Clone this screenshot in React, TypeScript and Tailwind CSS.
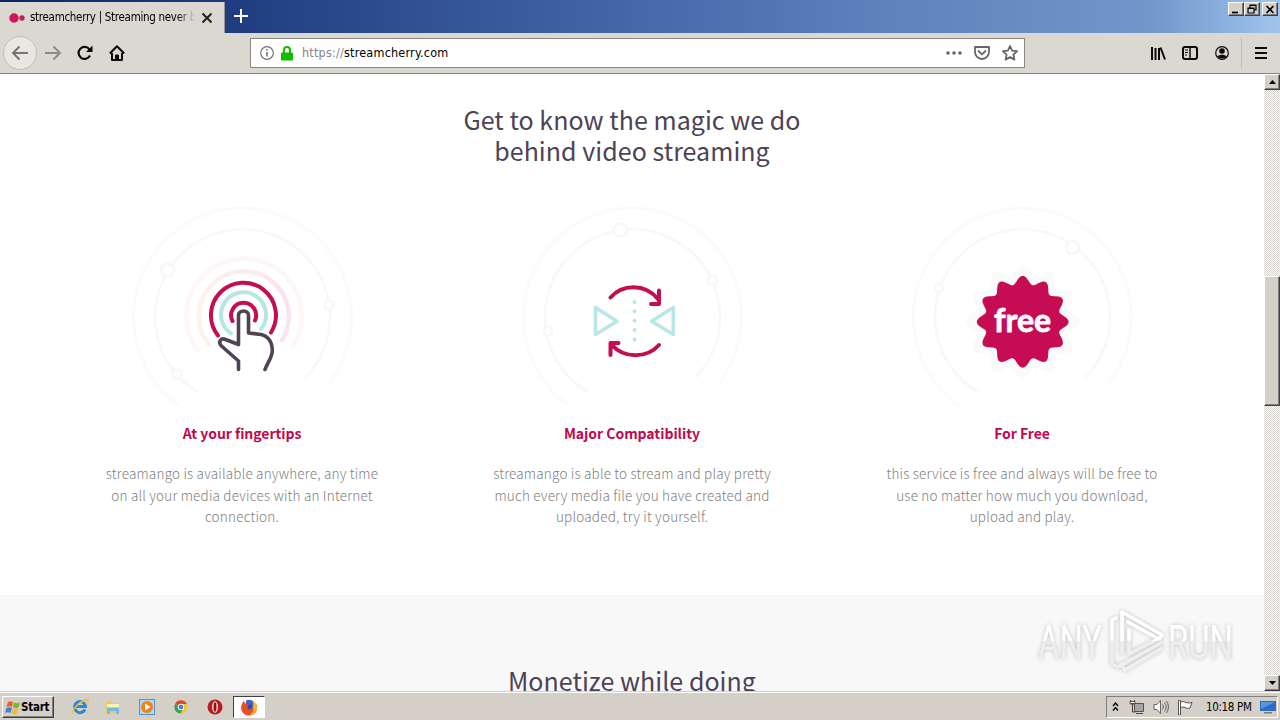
import type { ReactNode } from 'react'
import clsx from 'clsx'

const features = [
  {
    title: 'At your fingertips',
    lines: ['streamango is available anywhere, any time', 'on all your media devices with an Internet', 'connection.'],
    art: <FingerArt />,
  },
  {
    title: 'Major Compatibility',
    lines: ['streamango is able to stream and play pretty', 'much every media file you have created and', 'uploaded, try it yourself.'],
    art: <CompatArt />,
  },
  {
    title: 'For Free',
    lines: ['this service is free and always will be free to', 'use no matter how much you download,', 'upload and play.'],
    art: <FreeArt />,
  },
]

const raised = 'bg-[#d4d0c8] border border-t-white border-l-white border-r-[#404040] border-b-[#404040] shadow-[inset_-1px_-1px_0_#808080]'

// Wavy badge outline with twelve petals
function burst(cx: number, cy: number, radius: number, depth: number) {
  const points: string[] = []
  for (let i = 0; i < 360; i += 1) {
    const a = (i * Math.PI) / 180
    const r = radius + depth * Math.cos(12 * a)
    points.push(`${(cx + r * Math.sin(a)).toFixed(2)},${(cy - r * Math.cos(a)).toFixed(2)}`)
  }
  return points.join(' ')
}

function Rings({ dots, children }: { dots: number[][]; children: ReactNode }) {
  return (
    <svg width="245" height="220" viewBox="0 0 245 220" fill="none" strokeLinecap="round" strokeLinejoin="round">
      <path d="M58 210A109 109 0 1 1 210 187" stroke="#fbfbfb" strokeWidth="3.500" />
      <path d="M77 196.500A87.500 87.500 0 1 1 186 182" stroke="#f8f8f9" strokeWidth="2.700" />
      {dots.map(([x, y, r]) => (
        <circle key={x} cx={x} cy={y} r={r} fill="#fff" stroke="#f6f6f7" strokeWidth="2" />
      ))}
      {children}
    </svg>
  )
}

function FingerArt() {
  return (
    <Rings dots={[[47.5, 75, 6.5], [209, 110, 4.5], [57, 179, 4.5]]}>
      <path d="M78 155.500A57.500 57.500 0 1 1 173 151.500" stroke="#fef6f8" strokeWidth="4.500" />
      <path d="M88 148.500A45 45 0 1 1 162 145" stroke="url(#halo)" strokeWidth="4.500" />
      <path d="M98 140.500A32.500 32.500 0 1 1 151 137.500" stroke="#c30f52" strokeWidth="4" />
      <path d="M111 138.500A22.500 22.500 0 1 1 141 134" stroke="#b6e6e5" strokeWidth="4" />
      <path d="M112.500 126A12.500 12.500 0 1 1 135 125.500" stroke="#c30f52" strokeWidth="4" />
      <path
        d="M118.500 174.500V166L101.500 151C97.500 147 101 142.500 105.500 144.500L118.500 149.500V120.500C118.500 114.500 128.500 114.500 128.500 120.500V138L141 139.500C149 141 153.500 149 152 158C151 164 147 169 145 174.500"
        fill="#fff"
        stroke="#4f4355"
        strokeWidth="3.600"
      />
      <defs>
        <linearGradient id="halo">
          <stop offset="0" stopColor="#fff3e8" />
          <stop offset="0.450" stopColor="#fdecef" />
          <stop offset="1" stopColor="#f9e2f2" />
        </linearGradient>
      </defs>
    </Rings>
  )
}

function CompatArt() {
  return (
    <Rings dots={[[110.500, 35, 6.500], [202.500, 85, 4.500], [38, 136, 4.500]]}>
      <path d="M85.500 112.500V139.500L107 126.200zM163.300 112.500V139.500L141.500 126.200z" stroke="#b9e7e5" strokeWidth="3.600" />
      <path d="M124.500 107V145" stroke="#b9e7e5" strokeWidth="4" strokeDasharray="0 9.350" />
      <path d="M100.500 102.500C112 89 135 88 148 104M149 95.500V109M149 109H141" stroke="#c30f52" strokeWidth="4" />
      <path d="M149 150C137 163.500 114 164 101.500 149.500M100.500 160V148M100.500 148H108.500" stroke="#c30f52" strokeWidth="4" />
    </Rings>
  )
}

function FreeArt() {
  return (
    <Rings dots={[[172.500, 52.500, 6.500], [39, 93, 4]]}>
      <polygon points={burst(122.700, 126.800, 52, 5)} fill="#fafafa" />
      <polygon points={burst(122.700, 126.800, 41.900, 4)} fill="#c60d54" />
      <text
        x="94"
        y="136.500"
        textLength="57"
        lengthAdjust="spacingAndGlyphs"
        className="font-['Lato'] text-[33px] font-bold"
        fill="#fff"
        stroke="#fff"
        strokeWidth="0.800"
      >
        free
      </text>
    </Rings>
  )
}

function TitleBar() {
  return (
    <div className="flex h-[33px] items-start bg-[linear-gradient(90deg,#0a246a_0%,#1f3c80_18%,#3f62a4_45%,#5e83bd_70%,#7197cb_90%,#a0c4ec_100%)]">
      <div className="mt-[2px] flex h-[31px] w-[225px] items-center border-r border-[#9a978f] bg-[#dbd8d2] pl-[9px]">
        <svg width="16" height="12" viewBox="0 0 16 12">
          <circle cx="5" cy="6" r="4.700" fill="#d4145a" />
          <circle cx="13" cy="6" r="2.700" fill="#b5265d" />
        </svg>
        <div className="ml-[5px] w-[167px] overflow-hidden whitespace-nowrap font-['DejaVu_Sans_Condensed','DejaVu_Sans',sans-serif] text-[11.500px] tracking-[-0.300px] [mask-image:linear-gradient(90deg,#000_88%,transparent_99%)]">
          streamcherry | Streaming never been easier
        </div>
        <svg width="12" height="12" viewBox="0 0 12 12" className="ml-[4px]" stroke="#222" strokeWidth="2">
          <path d="M1.500 1.500l9 9M10.500 1.500l-9 9" />
        </svg>
      </div>
      <svg width="14" height="14" viewBox="0 0 14 14" className="ml-[9px] mt-[9px]" stroke="#fff" strokeWidth="2">
        <path d="M7 0v14M0 7h14" />
      </svg>
      <div className="ml-auto mr-[2px] mt-[2px] flex">
        {['M3 9.500h6', 'M5 5V2h6v5H9M3 5h6v5H3zM3 5.500h6M5 2.500h6', 'M3.500 3l7 7M10.500 3l-7 7'].map((d, i) => (
          <div key={d} className={clsx('h-[14px] w-[16px]', raised, i === 2 && 'ml-[2px]')}>
            <svg width="14" height="12" viewBox="0 0 14 12" fill="none" stroke="#000" strokeWidth={i === 1 ? 1.2 : 1.7}>
              <path d={d} />
            </svg>
          </div>
        ))}
      </div>
    </div>
  )
}

function NavBar() {
  return (
    <div className="flex h-[41px] items-center border-b border-[#85837f] bg-[#dbd8d2]">
      <div className="ml-[3px] flex h-[34px] w-[34px] items-center justify-center rounded-full border border-[#c1beb9] bg-[#e9e7e4]">
        <svg width="18" height="16" viewBox="0 0 18 16" fill="none" stroke="#77756f" strokeWidth="2">
          <path d="M17 8H2M8.500 1.500L2 8l6.500 6.500" />
        </svg>
      </div>
      <svg width="18" height="16" viewBox="0 0 18 16" className="ml-[7px]" fill="none" stroke="#8e8c87" strokeWidth="2">
        <path d="M1 8h15M9.500 1.500L16 8l-6.500 6.500" />
      </svg>
      <svg width="16" height="16" viewBox="0 0 16 16" className="ml-[15px]" fill="none" stroke="#0c0c0d" strokeWidth="2.200">
        <path d="M13 10.500A6 6 0 1 1 12.500 4.500" />
        <path d="M15.500 0.500v6.500H9z" fill="#0c0c0d" stroke="none" />
      </svg>
      <svg width="16" height="16" viewBox="0 0 16 16" className="ml-[16px]" fill="none" stroke="#0c0c0d" strokeWidth="2" strokeLinejoin="round">
        <path d="M0.800 8.500L8 1.300l7.200 7.200M3 8v7h10V8" />
        <path d="M6.500 14.500V10h3v4.500" fill="#0c0c0d" strokeWidth="1" />
      </svg>
      <div className="ml-[125px] flex h-[30px] w-[775px] items-center border border-[#8a8883] bg-white pl-[9px] pr-[6px]">
        <svg width="14" height="14" viewBox="0 0 14 14" fill="none" stroke="#737373">
          <circle cx="7" cy="7" r="6.300" strokeWidth="1.200" />
          <path d="M7 6v4.500M7 3v1.600" strokeWidth="1.600" />
        </svg>
        <svg width="12" height="15" viewBox="0 0 12 15" className="ml-[7px]">
          <path d="M3 7V4a3 3 0 0 1 6 0v3" fill="none" stroke="#12bc00" strokeWidth="2" />
          <rect y="6.500" width="12" height="8" rx="1" fill="#12bc00" />
        </svg>
        <div className="ml-[9px] whitespace-nowrap font-['DejaVu_Sans_Condensed','DejaVu_Sans',sans-serif] text-[12.500px] tracking-[0.210px]">
          <span className="text-[#85858a]">https://</span>streamcherry.com
        </div>
        <div className="ml-auto flex items-center text-[#66666a]">
          <svg width="16" height="4" viewBox="0 0 16 4" fill="currentColor">
            <circle cx="2" cy="2" r="1.800" />
            <circle cx="8" cy="2" r="1.800" />
            <circle cx="14" cy="2" r="1.800" />
          </svg>
          <svg width="16" height="14" viewBox="0 0 16 14" className="ml-[12px]" fill="none" stroke="currentColor" strokeWidth="1.800" strokeLinejoin="round">
            <path d="M1 1h14v5a7 7 0 0 1-14 0z" />
            <path d="M4.500 5L8 8.300 11.500 5" strokeLinecap="round" />
          </svg>
          <svg width="16" height="16" viewBox="0 0 16 16" className="ml-[12px]" fill="none" stroke="currentColor" strokeWidth="1.800" strokeLinejoin="round">
            <path d="M8 1l2.100 4.600 5 .6-3.700 3.400 1 5L8 12.100l-4.400 2.500 1-5L.9 6.200l5-.6z" />
          </svg>
        </div>
      </div>
      <svg width="16" height="15" viewBox="0 0 16 15" className="ml-[125px]" fill="none" stroke="#0c0c0d" strokeWidth="2">
        <path d="M2 1v13M5.500 2v12M9 2v12M10.500 1.500l4.500 12" />
      </svg>
      <svg width="16" height="14" viewBox="0 0 16 14" className="ml-[16px]" fill="none" stroke="#0c0c0d" strokeWidth="2">
        <rect x="1" y="1" width="14" height="12" rx="2" />
        <path d="M8 1v12" strokeWidth="1.500" />
        <path d="M3 4h3M3 6.500h3M3 9h2" strokeWidth="1" />
      </svg>
      <svg width="14" height="14" viewBox="0 0 14 14" className="ml-[17px]" fill="#0c0c0d">
        <circle cx="7" cy="7" r="6.300" fill="none" stroke="#0c0c0d" strokeWidth="1.200" />
        <circle cx="7" cy="5" r="2.800" />
        <path d="M2.500 10.500C4 8 10 8 11.500 10.500 9.500 13 4.500 13 2.500 10.500z" />
      </svg>
      <div className="ml-[12px] h-[32px] w-px bg-[#c3c0bb]" />
      <svg width="12" height="12" viewBox="0 0 12 12" className="ml-[13px]" stroke="#0c0c0d" strokeWidth="2">
        <path d="M0 1h12M0 6h12M0 11h12" />
      </svg>
    </div>
  )
}

function Scrollbar() {
  return (
    <div className="flex w-[16px] flex-col bg-[#eae8e4] bg-[repeating-conic-gradient(#fff_0_25%,#d8d4cd_0_50%)] bg-[length:2px_2px]">
      <div className={clsx('flex h-[16px] items-center justify-center', raised)}>
        <svg width="7" height="4"><path d="M0 4h7L3.500 0z" /></svg>
      </div>
      <div className={clsx('mt-[186px] h-[130px]', raised)} />
      <div className={clsx('mt-auto flex h-[16px] items-center justify-center', raised)}>
        <svg width="7" height="4"><path d="M0 0h7L3.500 4z" /></svg>
      </div>
    </div>
  )
}

function Watermark() {
  return (
    <svg width="220" height="80" viewBox="0 0 220 80" className="absolute left-[1030px] top-[602px] drop-shadow-[0_0_2px_rgba(0,0,0,0.220)]">
      <defs>
        <linearGradient id="wm" gradientUnits="userSpaceOnUse" x1="0" y1="0" x2="0" y2="80">
          <stop offset="0.480" stopColor="#ffffff" />
          <stop offset="0.490" stopColor="#ededed" />
          <stop offset="1" stopColor="#f0f0f0" />
        </linearGradient>
      </defs>
      <g fill="url(#wm)" className="font-['Roboto'] text-[49px]">
        <text x="8" y="57" textLength="64" lengthAdjust="spacingAndGlyphs">ANY</text>
        <text x="138" y="57" textLength="65" lengthAdjust="spacingAndGlyphs">RUN</text>
      </g>
      <g fill="none" stroke="url(#wm)" strokeWidth="3.600" strokeLinejoin="round" strokeLinecap="round">
        <path d="M92 52V10L132 33L129 37L98 20" />
        <path d="M99 28V52L126 38" />
        <path d="M86 16L82 18V62L88 65L131 41" />
        <path d="M91 62L95 68L132 46" />
      </g>
    </svg>
  )
}

function Taskbar() {
  return (
    <div className="flex h-[29px] items-center border-t border-[#d4d0c8] bg-[#d4d0c8] shadow-[inset_0_1px_0_#fff] font-['DejaVu_Sans_Condensed','DejaVu_Sans',sans-serif]">
      <div className={clsx('ml-[2px] mt-[2px] flex h-[22px] w-[52px] items-center pl-[2px]', raised)}>
        <svg width="15" height="15" viewBox="0 0 15 15">
          <path d="M3 2q2-1.500 5 0L7 7Q4 5.500 1.500 7z" fill="#e8622a" />
          <path d="M9 2.500q3 1.500 6 0L13.500 7.500Q11 9 8 7.500z" fill="#7db52f" />
          <path d="M1.500 8Q4 6.500 7 8L5.500 13Q3 11.500 0 13z" fill="#3f83d0" />
          <path d="M8 8.500q3 1.500 5.500 0L12 13.500q-3 1.500-5.500 0z" fill="#f4bb2b" />
        </svg>
        <span className="mt-[2px] ml-px text-[11.500px] font-bold tracking-[-0.250px]">Start</span>
      </div>
      <svg width="18" height="18" viewBox="0 0 18 18" className="mt-[2px] ml-[17px]" fill="none">
        <path d="M14 11.500A5.500 5.500 0 1 1 14.500 8.500H5" stroke="#2a8ad4" strokeWidth="3" />
        <path d="M2 16C-1 13 9 3 16 1.500c2 0 1.500 2 .5 3.500" stroke="#f0c23c" strokeWidth="1.300" />
      </svg>
      <svg width="16" height="16" viewBox="0 0 16 16" className="mt-[2px] ml-[16px]">
        <path d="M1 2h5l1 2h7v10H1z" fill="#e9cb69" />
        <path d="M2 5h12v3H2z" fill="#fff3b4" />
        <path d="M2 15V9h12v6h-3v-3H5v3z" fill="#77b9e4" />
      </svg>
      <svg width="16" height="16" viewBox="0 0 16 16" className="mt-[2px] ml-[18px]">
        <rect x="0.500" y="0.500" width="15" height="15" fill="#b4d6f2" stroke="#5792cc" />
        <circle cx="8" cy="8" r="6" fill="#ef8218" />
        <path d="M6 4.500v7L11.500 8z" fill="#fff" />
      </svg>
      <svg width="14" height="14" viewBox="0 0 14 14" className="mt-[2px] ml-[19px]">
        <circle cx="7" cy="7" r="6.500" fill="#f5c32b" />
        <path d="M7 7L1.200 3.800A6.500 6.500 0 0 1 12.800 4H7z" fill="#df4434" />
        <path d="M7 7L1.200 3.800A6.500 6.500 0 0 0 6.500 13.500L9 9z" fill="#36a35a" />
        <circle cx="7" cy="7" r="3.200" fill="#fff" />
        <circle cx="7" cy="7" r="2.400" fill="#4484e4" />
      </svg>
      <svg width="16" height="16" viewBox="0 0 16 16" className="mt-[2px] ml-[19px]">
        <circle cx="8" cy="8" r="7.500" fill="#b51d20" />
        <ellipse cx="8" cy="8" rx="2.900" ry="5.800" fill="#f5ebe8" />
        <ellipse cx="8" cy="8" rx="1.500" ry="4.800" fill="#92100f" />
      </svg>
      <div className="ml-[10px] mt-[2px] flex h-[22px] w-[32px] items-center justify-center border border-b-white border-l-[#404040] border-r-white border-t-[#404040] bg-white">
        <svg width="17" height="17" viewBox="0 0 17 17">
          <path d="M5 1.500q5-2 9 2l-2 5-7-1z" fill="#3b65c4" />
          <path d="M1 5l1.500-3L5 5l4 1-2 2 3 2.500q3-1 2-5l3-1a8 8 0 1 1-14 .5z" fill="#ee4b28" />
          <path d="M11 1q6 4 5 9-2 6-8 6.500 6-4 4-9 1-3-1-6.500z" fill="#fbb829" />
          <circle cx="9" cy="8" r="2.500" fill="#354da5" />
        </svg>
      </div>
      <div className="ml-auto mr-[2px] mt-[2px] flex h-[22px] w-[172px] items-center border border-b-white border-l-[#808080] border-r-white border-t-[#808080] pl-[5px]">
        <svg width="7" height="10" viewBox="0 0 7 10" fill="none" stroke="#000" strokeWidth="1.300">
          <path d="M1 4l2.500-3L6 4M1 8.500l2.500-3 2.500 3" />
        </svg>
        <svg width="16" height="16" viewBox="0 0 16 16" className="ml-[10px]" fill="none" stroke="#55534f">
          <path d="M5.500 4.500h9v8h-9z" fill="#a5a5a5" />
          <path d="M7 14.500h7M1.500 1v4h4V1M3.500 5v8h3" stroke="#444" />
          <path d="M1 2.500h5v2H1z" fill="#fff" />
        </svg>
        <svg width="16" height="14" viewBox="0 0 16 14" className="ml-[8px]" fill="none" stroke="#666">
          <path d="M1 4.500h3l3.500-4v13L4 9.500H1z" fill="#fff" />
          <path d="M9.500 4.500q2 2.500 0 5M11.500 2.500q3.500 4.500 0 9M13.500 1q4 6 0 12" />
        </svg>
        <svg width="16" height="15" viewBox="0 0 16 15" className="ml-[8px]" fill="#fff" stroke="#555">
          <path d="M1.500 15V.5h2V15z" />
          <path d="M3.500 2q3-1.500 5.500.5 3 1 6 0l-2 5.500q-3 1-5-.5-2-1-4.500 0z" />
        </svg>
        <span className="ml-[13px] mt-px whitespace-nowrap text-[11.500px] tracking-[-0.350px]">10:18 PM</span>
        <svg width="16" height="13" viewBox="0 0 16 13" className="ml-auto mr-px">
          <path d="M0 0h16v10H0z" fill="#2e6bc5" />
          <path d="M1 1h14L1 8z" fill="#5895df" />
          <path d="M4 11h8v1.500H4z" fill="#777" />
        </svg>
      </div>
    </div>
  )
}

export default function App() {
  return (
    <div className="relative flex h-[720px] w-[1280px] flex-col overflow-hidden bg-white text-black">
      <TitleBar />
      <NavBar />
      <div className="flex h-[617px]">
        <main className="w-[1264px] overflow-hidden text-center font-['Noto_Sans_CJK_SC',sans-serif]">
          <section className="h-[521px] pt-[30px]">
            <h2 className="text-[25px] leading-[31px] tracking-[0.040px] text-[#4d4256]">
              Get to know the magic we do
              <br />
              behind video streaming
            </h2>
            <div className="mx-auto mt-[29px] grid w-[1170px] grid-cols-3">
              {features.map((f) => (
                <div key={f.title} className="flex flex-col items-center">
                  {f.art}
                  <h3 className="mt-[7px] text-[14px] font-bold leading-[22px] tracking-[-0.040px] text-[#c0084e]">{f.title}</h3>
                  <p className="mt-[19px] whitespace-nowrap text-[13.500px] font-light leading-[21.500px] tracking-[0.200px] text-[#808080]">
                    {f.lines.map((line) => (
                      <span key={line} className="block">{line}</span>
                    ))}
                  </p>
                </div>
              ))}
            </div>
          </section>
          <section className="h-[180px] bg-[#f8f8f8] pt-[70px]">
            <h2 className="text-[25px] leading-[31px] tracking-[0.040px] text-[#4d4256]">Monetize while doing</h2>
          </section>
        </main>
        <Scrollbar />
      </div>
      <Taskbar />
      <Watermark />
    </div>
  )
}
